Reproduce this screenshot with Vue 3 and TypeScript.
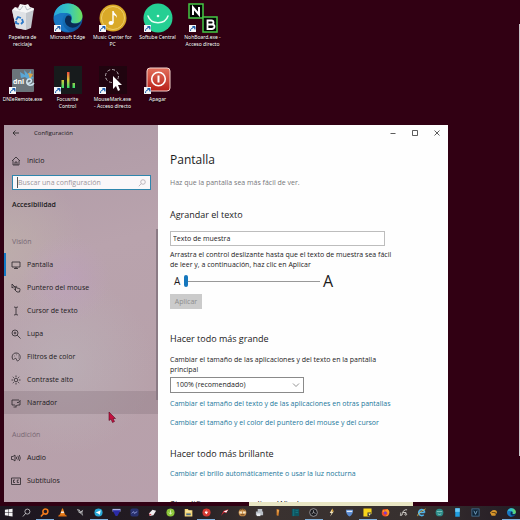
<script setup lang="ts">
import { ref } from 'vue'

interface Shortcut {
  id: string
  lines: string[]
  link: boolean
}

interface NavItem {
  id: string
  label: string
}

const shortcuts: Shortcut[] = [
  { id: 'bin', lines: ['Papelera de', 'reciclaje'], link: false },
  { id: 'edge', lines: ['Microsoft Edge'], link: true },
  { id: 'music', lines: ['Music Center for', 'PC'], link: true },
  { id: 'softube', lines: ['Softube Central'], link: true },
  { id: 'noh', lines: ['NohBoard.exe -', 'Acceso directo'], link: true },
  { id: 'dnie', lines: ['DNIeRemote.exe'], link: true },
  { id: 'focusrite', lines: ['Focusrite', 'Control'], link: true },
  { id: 'mousemark', lines: ['MouseMark.exe', '- Acceso directo'], link: true },
  { id: 'power', lines: ['Apagar'], link: true },
]

const vision: NavItem[] = [
  { id: 'display', label: 'Pantalla' },
  { id: 'pointer', label: 'Puntero del mouse' },
  { id: 'caret', label: 'Cursor de texto' },
  { id: 'magnifier', label: 'Lupa' },
  { id: 'palette', label: 'Filtros de color' },
  { id: 'contrast', label: 'Contraste alto' },
  { id: 'narrator', label: 'Narrador' },
]

const hearing: NavItem[] = [
  { id: 'audio', label: 'Audio' },
  { id: 'captions', label: 'Subtítulos' },
]

const tasks: string[] = [
  'start', 'search', 'everything', 'vlc', 'tools', 'telegram', 'flag', 'wave', 'eraser', 'lime',
  'folder', 'redball', 'swoosh', 'face', 'printer', 'flame', 'teal', 'obs', 'bolt', 'shield',
  'notes', 'firefox', 'cables', 'ie', 'mask', 'phone', 'vbox', 'gold', 'edge',
]
const running = ['everything', 'telegram', 'redball', 'obs', 'notes', 'edge']

const active = ref('display')
const query = ref('')
const sample = ref('Texto de muestra')
const textSize = ref(0)
const scale = ref('100')
</script>

<template>
  <div class="desktop">
    <svg class="defs" aria-hidden="true">
      <defs>
        <linearGradient id="edgeBlue" x1="0" y1="0" x2="1" y2="1">
          <stop offset="0" stop-color="#1b8fd6" />
          <stop offset="1" stop-color="#0c4a8f" />
        </linearGradient>
        <linearGradient id="edgeGreen" x1="0" y1="0" x2="1" y2="0">
          <stop offset="0" stop-color="#2aa6dd" />
          <stop offset="0.5" stop-color="#35c5c0" />
          <stop offset="1" stop-color="#6fe05a" />
        </linearGradient>
        <linearGradient id="bars" gradientUnits="userSpaceOnUse" x1="0" y1="7" x2="0" y2="23">
          <stop offset="0" stop-color="#f04a3c" />
          <stop offset="0.5" stop-color="#d8c83a" />
          <stop offset="1" stop-color="#2fe06a" />
        </linearGradient>
        <linearGradient id="redBtn" x1="0" y1="0" x2="0" y2="1">
          <stop offset="0" stop-color="#e2705c" />
          <stop offset="1" stop-color="#b81f18" />
        </linearGradient>
        <symbol id="edgeMark" viewBox="0 0 30 30">
          <circle cx="15" cy="15" r="14.500" fill="url(#edgeBlue)" />
          <path d="M1 13C2 5 8 .5 15 .5c8 0 14.500 6 14.500 12.500 0 5-4 7.500-8 7.500-3 0-4-1-3.500-2 2-3 1-8-4-8.500C8 9.500 3 11 1 13z" fill="url(#edgeGreen)" />
          <path d="M10 14c-2 6 1 12 7 14.500C9 30 2 24 1 16c2-6 9-7 13-5-2 0-3.500 1-4 3z" fill="#1976c4" />
          <path d="M13 14c1-2 4-2 5 0 .8 2-.8 3.500 0 5 1.500 2 6 2 10 0-3 6-9 7-13 4-3-2-4-6-2-9z" fill="#0a2c55" />
        </symbol>
      </defs>
    </svg>

    <ul class="shortcuts">
      <li v-for="s in shortcuts" :key="s.id">
        <button type="button" class="shortcut">
          <span class="art">
            <svg v-if="s.id === 'bin'" viewBox="0 0 30 30" aria-hidden="true">
              <path d="M4 7l22-2-3 20-5 2-10-2z" fill="#c3c8ce" />
              <path d="M4 7l14 3v17L8 25z" fill="#dfe2e6" />
              <path d="M4 7l3-3 3 1 2-4 5 1 3-1 2 3 3 1 1 2-8 3z" fill="#f5f6f7" />
              <path d="M9 5l3 2 3-4M17 3l2 4 4-2" fill="none" stroke="#a9b0b8" stroke-width=".8" />
              <path d="M8 17l2-3 3 1m1 1l1 3-2 2m-2 0l-3-1v-2" fill="none" stroke="#2a78c8" stroke-width="1.800" />
            </svg>
            <svg v-else-if="s.id === 'edge'" viewBox="0 0 30 30" aria-hidden="true"><use href="#edgeMark" /></svg>
            <svg v-else-if="s.id === 'music'" viewBox="0 0 30 30" aria-hidden="true">
              <circle cx="15" cy="15" r="13.500" fill="#d9a928" />
              <circle cx="15" cy="15" r="11.500" fill="none" stroke="#efcf6b" stroke-width="1" />
              <ellipse cx="13" cy="20" rx="2.500" ry="2" fill="#fff" />
              <path d="M14.300 20V8h1.400c.3 3 4 3 3 7-.5-2-1.500-2.500-3-3v8z" fill="#fff" />
            </svg>
            <svg v-else-if="s.id === 'softube'" viewBox="0 0 30 30" aria-hidden="true">
              <circle cx="15" cy="15" r="14.500" fill="#25cf93" />
              <path d="M5 13c3 9 17 9 20 0" fill="none" stroke="#e9fff5" stroke-width="1.500" stroke-linecap="round" />
              <circle cx="15" cy="13" r="1.300" fill="#e9fff5" />
            </svg>
            <svg v-else-if="s.id === 'noh'" viewBox="0 0 30 30" aria-hidden="true">
              <g fill="#050505" stroke="#45c845" stroke-width="1.500">
                <rect x="1" y="1" width="14" height="14" />
                <rect x="15" y="14" width="14" height="15" />
              </g>
              <path d="M5 12V4.500l6 7V4" fill="none" stroke="#fff" stroke-width="2" />
              <path d="M19.500 17.500h4q2 0 2 2t-2 2h-4h4.500q2.500 0 2.500 2t-2.500 2.500h-4.500z" fill="none" stroke="#fff" stroke-width="1.800" />
            </svg>
            <svg v-else-if="s.id === 'dnie'" viewBox="0 0 30 30" aria-hidden="true">
              <rect x="4" y="4" width="22" height="23" rx="1" fill="#6b747b" />
              <path d="M12 7l5 3-1-5 4 4 3-4v6l3 2-5 2-4-3-4 1z" fill="#5aa7d6" />
              <path d="M20 8l5 1-3 5z" fill="#d9a24a" />
              <text x="5" y="19" class="dni">dni</text>
              <path d="M19 18c4 1 6-3 3-4s-5 5-1 6c2 .5 4-.5 5-2" fill="none" stroke="#cfe3f0" stroke-width="1.500" />
            </svg>
            <svg v-else-if="s.id === 'focusrite'" viewBox="0 0 30 30" aria-hidden="true">
              <rect x="1" y="1" width="28" height="28" fill="#171b1c" />
              <g fill="url(#bars)">
                <rect x="8.500" y="15" width="2.500" height="8" />
                <rect x="14" y="7" width="2.500" height="16" />
                <rect x="19.500" y="18" width="2.500" height="5" />
              </g>
            </svg>
            <svg v-else-if="s.id === 'mousemark'" viewBox="0 0 30 30" aria-hidden="true">
              <rect x="1" y="1" width="28" height="28" fill="#20040f" />
              <circle cx="14" cy="11" r="6.500" fill="none" stroke="#b9b0b4" stroke-width="1" stroke-dasharray="3 2" />
              <path d="M15 11v13l3-3 2 5 2-1-2-5h4z" fill="#fff" />
            </svg>
            <svg v-else viewBox="0 0 30 30" aria-hidden="true">
              <rect x="4" y="3" width="23" height="23" rx="3" fill="url(#redBtn)" stroke="#f3d5cf" stroke-width="1" />
              <circle cx="15.500" cy="14" r="6.800" fill="none" stroke="#fff" stroke-width="1.600" />
              <path d="M15.500 10.500v7" stroke="#fff" stroke-width="2" />
            </svg>
            <svg v-if="s.link" class="badge" viewBox="0 0 7 7" aria-hidden="true">
              <rect width="7" height="7" fill="#f4f6f8" />
              <path d="M1.500 6c0-2 1-3 2.500-3V1.500H6v3" fill="none" stroke="#1d5fae" stroke-width="1" />
              <path d="M3 1.200h3v3z" fill="#1d5fae" />
            </svg>
          </span>
          <span class="caption"><span v-for="l in s.lines" :key="l">{{ l }}</span></span>
        </button>
      </li>
    </ul>

    <main class="window">
      <aside class="sidebar">
        <div class="titlebar">
          <button type="button" class="back" aria-label="Atrás">
            <svg viewBox="0 0 8 8"><path d="M7 4H1M3.500 1.500L1 4l2.500 2.500" /></svg>
          </button>
          <span>Configuración</span>
        </div>
        <a href="#" class="nav home">
          <svg viewBox="0 0 10 10"><path d="M1 5l4-4 4 4M2 4.500V9h6V4.500M4 9V6h2v3" /></svg>
          <span>Inicio</span>
        </a>
        <label class="search">
          <input v-model="query" type="text" placeholder="Buscar una configuración" aria-label="Buscar una configuración" />
          <svg viewBox="0 0 8 8" aria-hidden="true"><circle cx="5" cy="3" r="2.300" /><path d="M3.300 4.700L.8 7.200" /></svg>
        </label>
        <strong class="category">Accesibilidad</strong>

        <h2 class="group">Visión</h2>
        <nav>
          <a v-for="n in vision" :key="n.id" href="#" class="nav" :class="{ active: n.id === active, hovered: n.id === 'narrator' }" @click.prevent="active = n.id">
            <svg viewBox="0 0 10 10" aria-hidden="true">
              <path v-if="n.id === 'display'" d="M1 2h8v5H1zM5 7v1.500M3 8.500h4" />
              <path v-else-if="n.id === 'pointer'" d="M1 1v4l1.200-1L4 4zM4.500 7L3 5.500M4.500 7V3.500q.7-.8 1.200 0V5l2.800.5q.7.200.5 1L8.500 9H6L3.500 6.500" />
              <path v-else-if="n.id === 'caret'" d="M3 1q2 0 2 1 0-1 2-1M5 2v6M3 9q2 0 2-1 0 1 2 1" />
              <g v-else-if="n.id === 'magnifier'"><circle cx="4" cy="4" r="3" /><path d="M6.200 6.200L9.500 9.500M2.700 4h2.600M4 2.700v2.600" /></g>
              <path v-else-if="n.id === 'palette'" d="M2.500 8C0 6 1 1 5 1s5 4 3.500 6.500C7 9.500 5.500 9 5.500 7.500S3.500 6 3 7.500M3 4h.5M5 2.800h.5M7 4h.5M7.500 6h.5" />
              <g v-else-if="n.id === 'contrast'"><circle cx="5" cy="5" r="1.800" /><path d="M5 .5v1.500M5 8v1.500M.5 5h1.500M8 5h1.500M1.800 1.800l1 1M7.200 7.200l1 1M8.200 1.800l-1 1M2.800 7.200l-1 1" /></g>
              <path v-else d="M4 7H1V2h7M9 3v4H6.500L5 8.500V7M6 4l1 1 2.500-3M2.500 9h3" />
            </svg>
            <span>{{ n.label }}</span>
          </a>
        </nav>

        <h2 class="group second">Audición</h2>
        <nav>
          <a v-for="n in hearing" :key="n.id" href="#" class="nav" @click.prevent="active = n.id">
            <svg viewBox="0 0 10 10" aria-hidden="true">
              <path v-if="n.id === 'audio'" d="M.5 3.500h1.500L4 2v6L2 6.500H.5zM5.300 3.800q.8 1.200 0 2.400M6.800 2.800q1.500 2.200 0 4.400M8.300 2q2 3 0 6" />
              <path v-else d="M.5 2h9v6.500h-9zM4 4H2.500v2.500H4M7.800 4H6.300v2.500h1.500" />
            </svg>
            <span>{{ n.label }}</span>
          </a>
        </nav>
        <div class="thumb"></div>
      </aside>

      <section class="page">
        <div class="controls">
          <button type="button" aria-label="Minimizar"><svg viewBox="0 0 8 8"><path d="M1.500 4.500h5" /></svg></button>
          <button type="button" aria-label="Maximizar"><svg viewBox="0 0 8 8"><path d="M1.500 1.500h5v5h-5z" /></svg></button>
          <button type="button" aria-label="Cerrar"><svg viewBox="0 0 8 8"><path d="M1.500 1.500l5 5M6.500 1.500l-5 5" /></svg></button>
        </div>
        <h1>Pantalla</h1>
        <p class="lead">Haz que la pantalla sea más fácil de ver.</p>

        <h2 class="first">Agrandar el texto</h2>
        <input v-model="sample" class="sample" type="text" aria-label="Texto de muestra" />
        <p class="help">Arrastra el control deslizante hasta que el texto de muestra sea fácil de leer y, a continuación, haz clic en Aplicar</p>
        <label class="slider">
          <span class="small">A</span>
          <input v-model.number="textSize" type="range" min="0" max="100" aria-label="Tamaño del texto" />
          <span class="large">A</span>
        </label>
        <button type="button" class="apply" disabled>Aplicar</button>

        <h2 class="bigger">Hacer todo más grande</h2>
        <label class="help" for="scale">Cambiar el tamaño de las aplicaciones y del texto en la pantalla principal</label>
        <div class="select">
          <select id="scale" v-model="scale">
            <option value="100">100% (recomendado)</option>
            <option value="125">125%</option>
          </select>
          <svg viewBox="0 0 8 8" aria-hidden="true"><path d="M1 2.500l3 3 3-3" /></svg>
        </div>
        <a href="#" class="link">Cambiar el tamaño del texto y de las aplicaciones en otras pantallas</a>
        <a href="#" class="link">Cambiar el tamaño y el color del puntero del mouse y del cursor</a>

        <h2 class="brighter">Hacer todo más brillante</h2>
        <a href="#" class="link">Cambiar el brillo automáticamente o usar la luz nocturna</a>
        <h2 class="simplify">Simplificar y personalizar Windows</h2>
      </section>
    </main>

    <div class="tip"></div>
    <div class="screen-edge"></div>
    <svg class="cursor" viewBox="0 0 8 11" aria-hidden="true"><path d="M1 0v8.500l2-1.500 1.500 3.500 2-1L5 6.500h2.500z" fill="#c3103f" stroke="#5d0a22" stroke-width=".6" /></svg>

    <footer class="taskbar">
      <button v-for="t in tasks" :key="t" type="button" :aria-label="t" :class="{ running: running.includes(t) }">
        <svg viewBox="0 0 10 10" aria-hidden="true">
          <path v-if="t === 'start'" d="M1 2l3.700-.6v3.400H1zM5.200 1.300L9.500.7v4.100H5.200zM1 5.300h3.700v3.400L1 8.100zM5.200 5.300h4.300v4.100l-4.300-.6z" fill="#f2f2f4" />
          <g v-else-if="t === 'search'" fill="none" stroke="#e4e4e8"><circle cx="6" cy="4" r="2.800" /><path d="M4 6L1 9.500" /></g>
          <g v-else-if="t === 'everything'" fill="none" stroke="#f07a1c" stroke-width="1.700"><circle cx="6" cy="4" r="2.800" /><path d="M4 6L1 9.500" /></g>
          <g v-else-if="t === 'vlc'"><path d="M4.500.5h1L8 8H2z" fill="#ef8420" /><path d="M3.600 4h2.800l.5 1.500H3.100z" fill="#f2eae2" /><path d="M1 7.500h8l.8 2H.2z" fill="#d86c12" /></g>
          <g v-else-if="t === 'tools'"><path d="M1 1l3 1 1 2 3-2-1 3 1 4-3-3-2-1z" fill="#b9b9bc" /><path d="M2 3l2 1M6 5l1 2" stroke="#4a484c" stroke-width="1" /></g>
          <g v-else-if="t === 'telegram'"><circle cx="5" cy="5" r="4.500" fill="#27a9d8" /><path d="M2 5l5.500-2.500-1 5-2-1.500z" fill="#fff" /></g>
          <g v-else-if="t === 'flag'"><path d="M.5 1h9v3h-9z" fill="#a9aee6" /><path d="M.5 2.500h9L6 9H4z" fill="#2b2ba6" /></g>
          <g v-else-if="t === 'wave'"><rect x=".5" y=".5" width="9" height="9" rx="2" fill="#28306e" /><path d="M2 6l2-2 1 2 3-2" fill="none" stroke="#a7b2ee" /></g>
          <g v-else-if="t === 'eraser'"><path d="M1 6l4-4 4 1-3 5-4 1z" fill="#f0eef0" /><path d="M1 6l3 1-2 2z" fill="#c43b4b" /></g>
          <g v-else-if="t === 'lime'"><circle cx="5" cy="5" r="4.500" fill="#8cc63a" /><path d="M5 2.500v4M3.300 5L5 7l1.700-2" stroke="#f4ffe2" fill="none" /></g>
          <g v-else-if="t === 'folder'"><path d="M.8 1h3.500l1 1.500h4v7H.8z" fill="#f3d67a" /><path d="M2.500 6h5v2h-5z" fill="#4f6f86" /><path d="M2 3.500h6" stroke="#fff7d2" /></g>
          <g v-else-if="t === 'redball'"><circle cx="5" cy="5" r="4.500" fill="#d63a32" /><path d="M3 5l2-2.500v2l2-.5-2 3z" fill="#fff" /></g>
          <g v-else-if="t === 'swoosh'"><path d="M1 9l3-6 5.500-1.500L7 5.500 4.500 5z" fill="#d42a38" /><path d="M4 4l5-2-2 3z" fill="#fff" /></g>
          <g v-else-if="t === 'face'"><circle cx="5" cy="5" r="4.300" fill="#c78b46" /><path d="M1.500 4h3v2h-3zM5.500 4h3v2h-3z" fill="#f6e6c4" /><path d="M2 2.500Q5 0 8 2.500M3 7.500h4" stroke="#4b2f18" fill="none" /></g>
          <g v-else-if="t === 'printer'"><path d="M1 4h8v4H1zM3 1h5v3H3z" fill="#b9bfc6" /><path d="M2 6h4v3H2z" fill="#e9edf0" /></g>
          <g v-else-if="t === 'flame'"><path d="M4 1l3 1-1 7-2-1z" fill="#d9822a" /><path d="M5 2l1 .5-.5 3z" fill="#ffe29a" /></g>
          <g v-else-if="t === 'teal'"><rect x="1" y="1" width="8" height="8" fill="#0f5560" /><path d="M3 1v8M5 3h3M5 5h3" stroke="#16808b" /></g>
          <g v-else-if="t === 'obs'"><circle cx="5" cy="5" r="4.300" fill="#1c1c20" stroke="#b5b5b8" stroke-width=".8" /><path d="M5 2.500v2.500l-2 1.500M5 5l2.300 1" stroke="#b5b5b8" fill="none" /></g>
          <g v-else-if="t === 'bolt'"><path d="M6 .5L3 5.500h2L3.500 9.500 7.500 4h-2z" fill="#f2e6bd" /><path d="M6 .5L5 4h2.500z" fill="#e2a52e" /></g>
          <g v-else-if="t === 'shield'"><path d="M1 2h8c0 4-1.500 6-4 7.500C2.500 8 1 6 1 2z" fill="#5b8bd0" /><path d="M2 3h6v1.500H2z" fill="#e4ecf6" /></g>
          <g v-else-if="t === 'notes'"><path d="M.5.5h9v6L7 9.500H.5z" fill="#f7d51c" /><path d="M5 5h4v4H5z" fill="#32343c" /><path d="M6 6h3L7 8.500z" fill="#fff3a0" /></g>
          <g v-else-if="t === 'firefox'"><circle cx="5" cy="5.300" r="4.200" fill="#ef4a2a" /><path d="M2 1.500L4 3l3-2q3 2 2 5-1 3-4 3 3-1.500 2-4-2-2-5 0z" fill="#fb9a22" /><circle cx="4.800" cy="5.500" r="1.600" fill="#7a3bd0" /></g>
          <g v-else-if="t === 'cables'" fill="none" stroke="#c9c6c1" stroke-width="1.100"><path d="M1 8q3 1 3-2t3-4h2M4 5h4M2 8V5" /><circle cx="7.500" cy="7" r="1" /></g>
          <g v-else-if="t === 'ie'"><path d="M8.500 5H3M8.500 5a3.300 3.300 0 1 0-1 2.500" fill="none" stroke="#4fb4ec" stroke-width="1.800" /><path d="M.8 9Q0 6 9.500 1" fill="none" stroke="#efc64b" /></g>
          <g v-else-if="t === 'mask'"><circle cx="5" cy="5" r="4.300" fill="#2b8a86" /><path d="M2 4h6M3 6.500q2 1.500 4 0" stroke="#a5dbd5" fill="none" /></g>
          <g v-else-if="t === 'phone'"><rect x="2.500" y=".3" width="5" height="9.400" fill="#1f9ee0" /><path d="M2.500.3h5v4h-5z" fill="#6cc9f4" /></g>
          <g v-else-if="t === 'vbox'"><rect x="1" y="1" width="8" height="8" fill="#0f2334" stroke="#4d7ea5" /><path d="M3.200 3L5 7l1.800-4" fill="none" stroke="#8fc0e6" /></g>
          <g v-else-if="t === 'gold'"><path d="M1 5l3-2.500q4-1 5 2L7 8.500H3z" fill="#d9962c" /><path d="M3 5h4v2" stroke="#4a2f0e" fill="none" /></g>
          <use v-else href="#edgeMark" />
        </svg>
      </button>
    </footer>
  </div>
</template>

<style>
body {
  margin: 0;
  background: #310013;
}
</style>

<style scoped>
* {
  box-sizing: border-box;
}

.desktop {
  position: relative;
  display: flex;
  flex-direction: column;
  height: 100vh;
  min-height: 400px;
  overflow: hidden;
  background: #310013;
  font-family: "Open Sans", "Noto Sans", sans-serif;
  font-size: 7px;
  line-height: 10px;
  color: #1c1a1c;
}

button,
input,
select {
  margin: 0;
  padding: 0;
  border: 0;
  border-radius: 0;
  background: none;
  font: inherit;
  color: inherit;
}

a {
  color: inherit;
  text-decoration: none;
}

h1,
h2,
p,
ul {
  margin: 0;
  padding: 0;
  font-weight: 400;
}

.defs {
  position: absolute;
  width: 0;
  height: 0;
}

.shortcuts {
  display: grid;
  flex: none;
  grid-template-columns: repeat(5, 45px);
  grid-auto-rows: 62px;
  height: 125px;
  padding-top: 3px;
  list-style: none;
}

.shortcut {
  display: flex;
  flex-direction: column;
  align-items: center;
  width: 100%;
}

.art {
  position: relative;
  width: 30px;
  height: 30px;
}

.art svg {
  display: block;
  width: 30px;
  height: 30px;
}

.art .badge {
  position: absolute;
  bottom: 1px;
  left: 1px;
  width: 7px;
  height: 7px;
}

.dni {
  font: bold 7px "Open Sans", sans-serif;
  fill: #fff;
}

.caption {
  display: flex;
  flex-direction: column;
  align-items: center;
  margin-top: 1px;
  font-family: "Noto Sans", sans-serif;
  font-size: 5px;
  line-height: 7px;
  white-space: nowrap;
  color: #fff;
  text-shadow: 0 1px 1px #000;
}

.window {
  display: flex;
  flex: 1;
  min-height: 0;
  width: calc(100% - 72px - 4px);
  margin-left: 4px;
  overflow: hidden;
  background: #fefefe;
}

.sidebar {
  position: relative;
  flex: none;
  width: 154px;
  background:
    radial-gradient(circle at 62px 155px, rgb(190 160 192 / 55%), transparent 45px),
    radial-gradient(circle at 0 120px, rgb(192 180 170 / 60%), transparent 80px),
    radial-gradient(circle at 60px 240px, rgb(188 182 188 / 55%), transparent 90px),
    linear-gradient(165deg, #ae9aa6, #b9a3ad 35%, #b7a1aa 70%, #b8a0ac);
}

.titlebar {
  display: flex;
  align-items: center;
  gap: 14px;
  height: 16px;
  padding-left: 8px;
  font-size: 6px;
}

svg {
  fill: none;
  stroke-width: 0.8;
}

.back,
.back svg {
  display: block;
  width: 8px;
  height: 8px;
  stroke: #222;
}

.nav {
  display: flex;
  align-items: center;
  gap: 6px;
  height: 23px;
  padding-left: 7px;
}

.nav svg {
  width: 10px;
  height: 10px;
  stroke: #29242a;
}

.nav.home {
  margin-top: 8px;
}

.nav.active {
  padding-left: 5px;
  border-left: 2px solid #1177c4;
}

.nav.hovered {
  background: rgb(130 110 120 / 30%);
}

.search {
  display: flex;
  align-items: center;
  height: 15px;
  margin: 3px 7px 0 8px;
  padding: 0 4px;
  border: 1px solid #2f86ad;
  background: #faf7f9;
}

.search input {
  flex: 1;
  min-width: 0;
  height: 11px;
  border-left: 1px solid #555;
  outline: 0;
}

.search input::placeholder {
  color: #9a949a;
  opacity: 1;
}

.search svg {
  width: 8px;
  height: 8px;
  stroke: #b0a8b0;
}

.category {
  display: block;
  margin: 10px 8px 0;
  font-weight: 600;
}

.group {
  margin: 27px 8px 6px;
  font-size: 7px;
  color: #776874;
}

.group.second {
  margin: 16px 8px 6px;
}

.thumb {
  position: absolute;
  top: 104px;
  right: 0;
  width: 2px;
  height: 171px;
  background: #8b7b85;
}

.page {
  flex: 1;
  min-width: 0;
  padding-left: 12px;
}

.controls {
  display: flex;
  justify-content: flex-end;
  align-items: center;
  gap: 14px;
  height: 16px;
  padding-right: 7px;
}

.controls svg {
  display: block;
  width: 8px;
  height: 8px;
  stroke: #333;
}

h1 {
  margin-top: 10px;
  font-size: 12px;
  line-height: 18px;
}

.lead {
  margin-top: 9px;
  color: #77777a;
}

.page h2 {
  font-size: 9px;
  line-height: 12px;
}

.page .first {
  margin-top: 21px;
}

.sample {
  display: block;
  width: 215px;
  height: 15px;
  margin-top: 10px;
  padding-left: 2px;
  border: 1px solid #bdbdbd;
  background: #fff;
}

.help {
  display: block;
  width: 224px;
}

p.help {
  margin-top: 4px;
}

.slider {
  display: flex;
  align-items: center;
  height: 14px;
  margin-top: 4px;
  padding-left: 4px;
}

.small {
  width: 10px;
  font-size: 10px;
}

.large {
  margin-left: 3px;
  font-size: 16px;
}

.slider input {
  width: 136px;
  height: 12px;
  appearance: none;
}

.slider input::-webkit-slider-runnable-track {
  height: 12px;
  background: linear-gradient(#999, #999) center / 100% 1px no-repeat;
}

.slider input::-webkit-slider-thumb {
  width: 4px;
  height: 12px;
  border-radius: 2px;
  background: #1577bd;
  appearance: none;
}

.apply {
  display: block;
  width: 32px;
  height: 15px;
  margin-top: 6px;
  background: #cbcbcb;
  color: #8d8d8d;
}

.page .bigger {
  margin: 24px 0 10px;
}

.select {
  position: relative;
  width: 134px;
  margin: 2px 0 6px;
}

.select select {
  display: block;
  width: 100%;
  height: 16px;
  padding-left: 5px;
  border: 1px solid #8a8a8a;
  background: #fff;
  appearance: none;
}

.select svg {
  position: absolute;
  top: 4px;
  right: 4px;
  width: 8px;
  height: 8px;
  stroke: #777;
}

.link {
  display: block;
  margin-bottom: 9px;
  color: #22789c;
}

.page .brighter {
  margin: 20px 0 9px;
}

.page .simplify {
  margin-top: 20px;
}

.tip {
  flex: none;
  width: 164px;
  height: 4px;
  margin-left: 249px;
  background: #e9e6c4;
}

.screen-edge {
  position: absolute;
  top: 24px;
  right: 0;
  width: 1px;
  height: 432px;
  background: #c9c4c8;
}

.cursor {
  position: absolute;
  top: 412px;
  left: 108px;
  width: 8px;
  height: 11px;
}

.taskbar {
  display: grid;
  flex: none;
  grid-template-columns: repeat(29, 1fr);
  height: 14px;
  background: linear-gradient(90deg, #1d1620, #241d22 35%, #3a3230 50%, #37302f 80%, #241c25);
}

.taskbar button {
  display: flex;
  justify-content: center;
  align-items: center;
  border-bottom: 1px solid transparent;
}

.taskbar .running {
  border-bottom-color: #7fb0dc;
}

.taskbar svg {
  width: 9px;
  height: 9px;
}
</style>
